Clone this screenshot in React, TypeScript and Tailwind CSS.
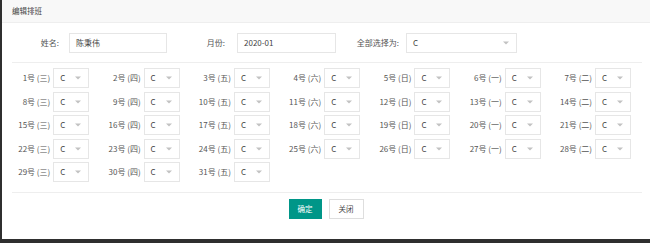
const weekdays = ["三", "四", "五", "六", "日", "一", "二"];

const days = Array.from({ length: 31 }, (_, i) => ({
  day: i + 1,
  week: weekdays[i % 7],
}));

function Caret() {
  return (
    <svg width="6" height="4" viewBox="0 0 6 4" className="shrink-0">
      <path d="M0 0.5 L6 0.5 L3 3.5 Z" fill="#c2c2c2" />
    </svg>
  );
}

function MiniSelect({ value, width }: { value: string; width: string }) {
  return (
    <div
      className={`flex h-[20px] items-center justify-between border border-[#e6e6e6] bg-white pl-[6px] pr-[7px] text-[8px] text-[#444] ${width}`}
    >
      <span>{value}</span>
      <Caret />
    </div>
  );
}

export default function App() {
  return (
    <div
      className="h-[243px] w-[650px] overflow-hidden bg-[#2f2f2f] pl-[2px]"
      style={{ fontFamily: '"Noto Sans CJK SC", "Liberation Sans", sans-serif' }}
    >
      <div className="flex h-[239px] flex-col bg-white">
        {/* header */}
        <div className="flex h-[23px] shrink-0 items-center border-b border-[#eeeeee] bg-[#f8f8f8] pl-[10px] text-[7.5px] text-[#444]">
          编辑排班
        </div>

        {/* top form row */}
        <div className="mt-[10px] flex h-[20px] items-center text-[8px] text-[#555]">
          <div className="w-[57px] text-right">姓名:</div>
          <div className="ml-[10px] flex h-full w-[98px] items-center border border-[#e6e6e6] pl-[6px] text-[#444]">
            陈秉伟
          </div>
          <div className="w-[58px] text-right">月份:</div>
          <div className="ml-[12px] flex h-full w-[99px] items-center border border-[#e6e6e6] pl-[6px] text-[#444]">
            2020-01
          </div>
          <div className="w-[63px] text-right">全部选择为:</div>
          <div className="ml-[7px] h-full">
            <MiniSelect value="C" width="w-[111px]" />
          </div>
        </div>

        <div className="mt-[9px] ml-[10px] mr-[8px] h-px bg-[#eeeeee]" />

        {/* day grid */}
        <div className="mt-[5px] grid grid-cols-[repeat(7,90.3px)] gap-y-[3.5px]">
          {days.map((d) => (
            <div key={d.day} className="flex items-center justify-end pr-[3px]">
              <span className="whitespace-nowrap text-[8px] text-[#555]">
                {d.day}号 ({d.week})
              </span>
              <div className="ml-[3px]">
                <MiniSelect value="C" width="w-[36px]" />
              </div>
            </div>
          ))}
        </div>

        <div className="mt-[10px] ml-[10px] mr-[8px] h-px bg-[#eeeeee]" />

        {/* buttons */}
        <div className="mt-[6px] flex justify-center gap-[7px]">
          <button className="h-[20px] w-[33px] bg-[#009688] text-[7.5px] text-white">确定</button>
          <button className="h-[20px] w-[35px] border border-[#dedede] bg-white text-[7.5px] text-[#444]">
            关闭
          </button>
        </div>
      </div>
    </div>
  );
}
